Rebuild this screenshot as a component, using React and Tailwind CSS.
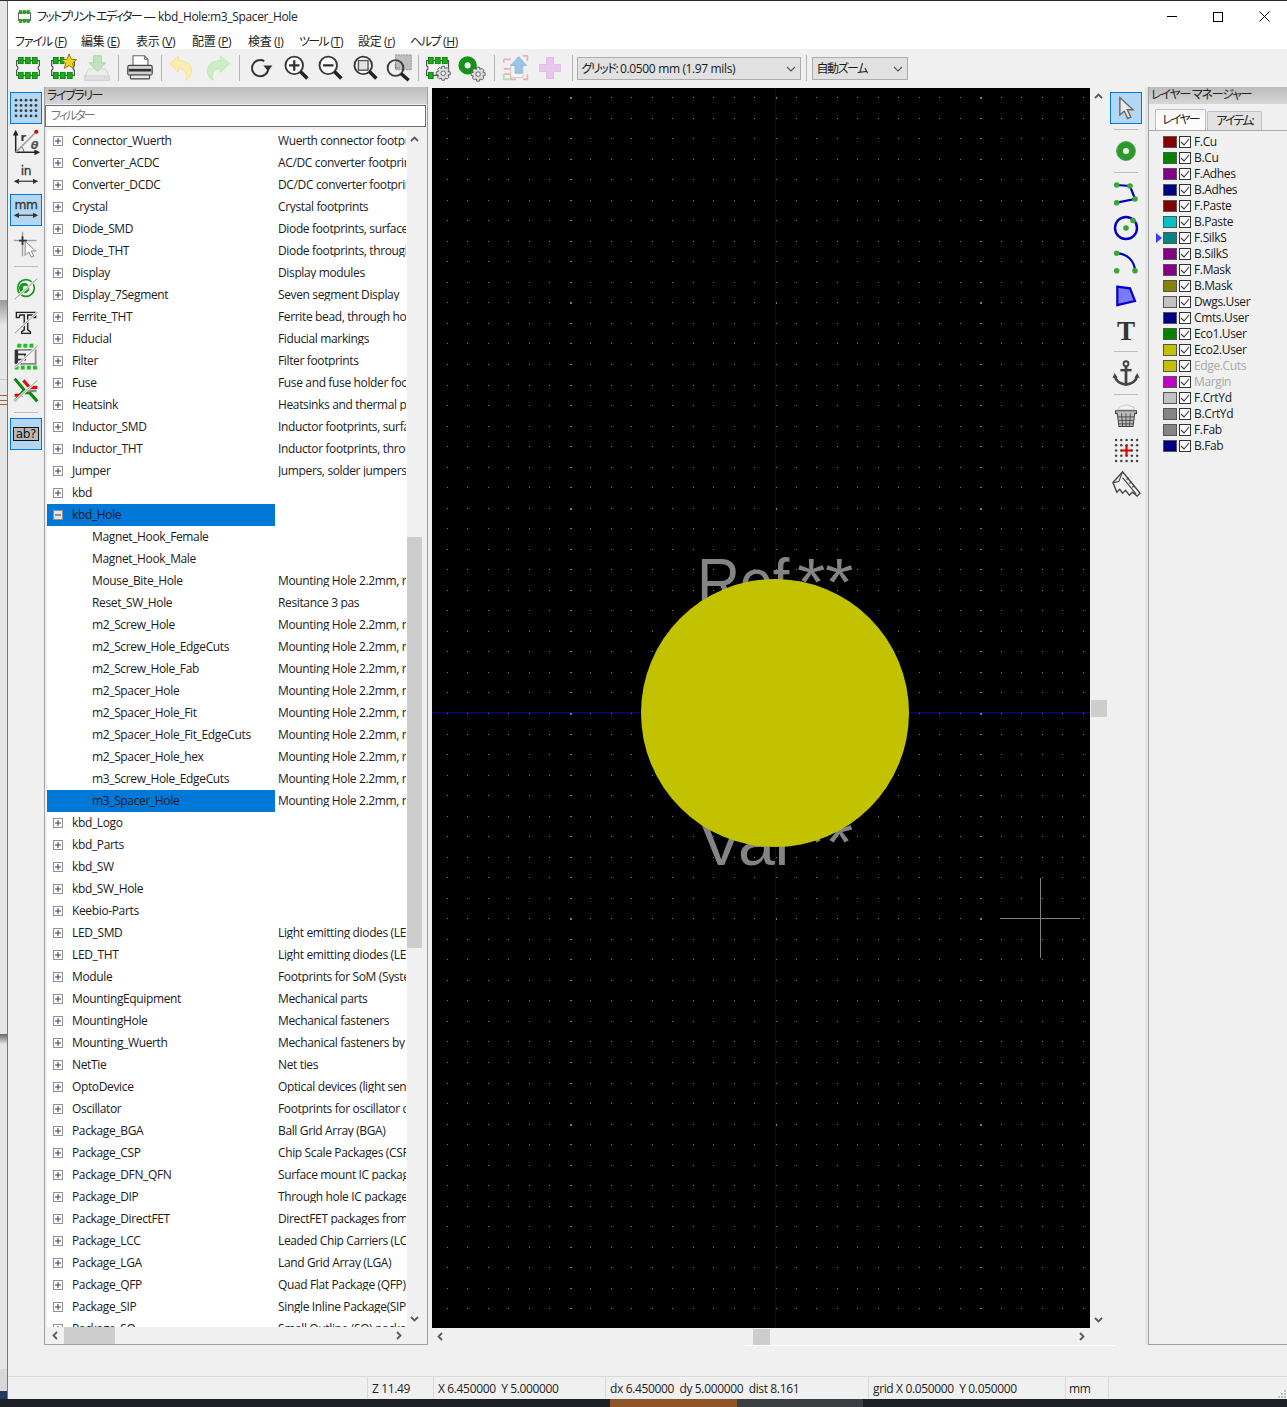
import React from "react";

const FONT = "font-['Open_Sans','Noto_Sans_CJK_JP',sans-serif]";

const TREE = [
  ["Connector_Wuerth", "Wuerth connector footprints"],
  ["Converter_ACDC", "AC/DC converter footprints"],
  ["Converter_DCDC", "DC/DC converter footprints"],
  ["Crystal", "Crystal footprints"],
  ["Diode_SMD", "Diode footprints, surface mount"],
  ["Diode_THT", "Diode footprints, through hole"],
  ["Display", "Display modules"],
  ["Display_7Segment", "Seven segment Display"],
  ["Ferrite_THT", "Ferrite bead, through hole"],
  ["Fiducial", "Fiducial markings"],
  ["Filter", "Filter footprints"],
  ["Fuse", "Fuse and fuse holder footprints"],
  ["Heatsink", "Heatsinks and thermal pads"],
  ["Inductor_SMD", "Inductor footprints, surface mount"],
  ["Inductor_THT", "Inductor footprints, through hole"],
  ["Jumper", "Jumpers, solder jumpers, etc"],
  ["kbd", ""],
  ["kbd_Hole", "", "open"],
  ["Magnet_Hook_Female", "", "child"],
  ["Magnet_Hook_Male", "", "child"],
  ["Mouse_Bite_Hole", "Mounting Hole 2.2mm, no annular", "child"],
  ["Reset_SW_Hole", "Resitance 3 pas", "child"],
  ["m2_Screw_Hole", "Mounting Hole 2.2mm, no annular", "child"],
  ["m2_Screw_Hole_EdgeCuts", "Mounting Hole 2.2mm, no annular", "child"],
  ["m2_Screw_Hole_Fab", "Mounting Hole 2.2mm, no annular", "child"],
  ["m2_Spacer_Hole", "Mounting Hole 2.2mm, no annular", "child"],
  ["m2_Spacer_Hole_Fit", "Mounting Hole 2.2mm, no annular", "child"],
  ["m2_Spacer_Hole_Fit_EdgeCuts", "Mounting Hole 2.2mm, no annular", "child"],
  ["m2_Spacer_Hole_hex", "Mounting Hole 2.2mm, no annular", "child"],
  ["m3_Screw_Hole_EdgeCuts", "Mounting Hole 2.2mm, no annular", "child"],
  ["m3_Spacer_Hole", "Mounting Hole 2.2mm, no annular", "sel"],
  ["kbd_Logo", ""],
  ["kbd_Parts", ""],
  ["kbd_SW", ""],
  ["kbd_SW_Hole", ""],
  ["Keebio-Parts", ""],
  ["LED_SMD", "Light emitting diodes (LED)"],
  ["LED_THT", "Light emitting diodes (LED)"],
  ["Module", "Footprints for SoM (System on Module)"],
  ["MountingEquipment", "Mechanical parts"],
  ["MountingHole", "Mechanical fasteners"],
  ["Mounting_Wuerth", "Mechanical fasteners by Wuerth"],
  ["NetTie", "Net ties"],
  ["OptoDevice", "Optical devices (light sensors)"],
  ["Oscillator", "Footprints for oscillator devices"],
  ["Package_BGA", "Ball Grid Array (BGA)"],
  ["Package_CSP", "Chip Scale Packages (CSP)"],
  ["Package_DFN_QFN", "Surface mount IC packages"],
  ["Package_DIP", "Through hole IC packages"],
  ["Package_DirectFET", "DirectFET packages from Infineon"],
  ["Package_LCC", "Leaded Chip Carriers (LCC)"],
  ["Package_LGA", "Land Grid Array (LGA)"],
  ["Package_QFP", "Quad Flat Package (QFP)"],
  ["Package_SIP", "Single Inline Package(SIP)"],
  ["Package_SO", "Small Outline (SO) packages"],
];

const LAYERS = [
  ["F.Cu", "bg-[#840000]"],
  ["B.Cu", "bg-[#008400]"],
  ["F.Adhes", "bg-[#840084]"],
  ["B.Adhes", "bg-[#000084]"],
  ["F.Paste", "bg-[#840000]"],
  ["B.Paste", "bg-[#00c2c2]"],
  ["F.SilkS", "bg-[#008484]", "active"],
  ["B.SilkS", "bg-[#840084]"],
  ["F.Mask", "bg-[#840084]"],
  ["B.Mask", "bg-[#848400]"],
  ["Dwgs.User", "bg-[#c2c2c2]"],
  ["Cmts.User", "bg-[#000084]"],
  ["Eco1.User", "bg-[#008400]"],
  ["Eco2.User", "bg-[#c2c200]"],
  ["Edge.Cuts", "bg-[#c2c200]", "dim"],
  ["Margin", "bg-[#c200c2]", "dim"],
  ["F.CrtYd", "bg-[#c2c2c2]"],
  ["B.CrtYd", "bg-[#848484]"],
  ["F.Fab", "bg-[#848484]"],
  ["B.Fab", "bg-[#000084]"],
];

const MENUS = [
  ["ファイル", "F", "w-[66px]", "tracking-[-1.2px]"],
  ["編集", "E", "w-[55px]", ""],
  ["表示", "V", "w-[56px]", ""],
  ["配置", "P", "w-[56px]", ""],
  ["検査", "I", "w-[51px]", ""],
  ["ツール", "T", "w-[59px]", "tracking-[-1.8px]"],
  ["設定", "r", "w-[52px]", ""],
  ["ヘルプ", "H", "w-[60px]", "tracking-[-1.4px]"],
];

function buildDots() {
  const small = [];
  for (let i = -16; i <= 15; i++) {
    for (let j = -30; j <= 30; j++) {
      const x = Math.round(775 + i * 20.53) - 432;
      const y = Math.round(713 + j * 20.53) - 88;
      const w = i % 10 === 0 ? 2 : 1;
      const h = j % 10 === 0 && i % 10 === 0 ? 2 : 1;
      small.push(`M${x} ${y}h${w}v${h}h${-w}z`);
    }
  }
  return small.join("");
}
const DOTS = buildDots();

function Ic({ size = 28, children, className = "" }) {
  return (
    <svg width={size} height={size} viewBox="0 0 32 32" fill="none" className={className}>
      {children}
    </svg>
  );
}

function Pads({ y }) {
  return (
    <>
      {[5, 13, 21].map((x) => (
        <rect key={x} x={x} y={y} width="5.5" height="7" fill="#12b312" stroke="#0a7a0a" strokeWidth="1" />
      ))}
    </>
  );
}

function FpBody() {
  return (
    <path
      d="M3 7.5H29V13.5C27 14.5 27 17.5 29 18.5V24.5H3V18.5C5 17.5 5 14.5 3 13.5Z"
      fill="#f4f4f4"
      stroke="#555"
      strokeWidth="1.4"
    />
  );
}

function FpIcon() {
  return (
    <Ic>
      <FpBody />
      <Pads y={4} />
      <Pads y={21} />
    </Ic>
  );
}

function FpStar() {
  return (
    <Ic>
      <FpBody />
      <Pads y={21} />
      <rect x="5" y="4" width="5.5" height="7" fill="#12b312" stroke="#0a7a0a" />
      <rect x="13" y="4" width="4" height="7" fill="#12b312" stroke="#0a7a0a" />
      <path
        d="M23 0L25.5 6L31.5 6.5L27 10.5L28.5 16.5L23 13.2L17.5 16.5L19 10.5L14.5 6.5L20.5 6Z"
        fill="#f3d21a"
        stroke="#7d6a00"
        strokeWidth="1"
      />
    </Ic>
  );
}

function DriveDown() {
  return (
    <Ic>
      <path d="M6 17L2 26V30H30V26L26 17Z" fill="#ececec" stroke="#d0d0d0" />
      <rect x="2" y="25" width="28" height="5" fill="#e0e0e0" stroke="#cfcfcf" />
      <circle cx="25" cy="27.5" r="1" fill="#b5dfb5" />
      <path d="M12 2H21V10H26L16.5 20L7 10H12Z" fill="#bfe3bb" stroke="#a9d2a5" />
    </Ic>
  );
}

function Printer() {
  return (
    <Ic>
      <path d="M8 2H21L25 6V14H8Z" fill="#fff" stroke="#666" strokeWidth="1.3" />
      <path d="M21 2V6H25" stroke="#666" strokeWidth="1" />
      <rect x="2" y="13" width="28" height="11" rx="2" fill="#d0d0d0" stroke="#444" strokeWidth="1.3" />
      <rect x="3" y="17" width="26" height="3" fill="#2f2f2f" />
      <rect x="5" y="24" width="22" height="4.5" rx="1.5" fill="#e8e8e8" stroke="#444" strokeWidth="1.3" />
    </Ic>
  );
}

function Undo() {
  return (
    <Ic>
      <path
        d="M2 11L12 2V7.5C22 7.5 28 13 27 21C26.5 25.5 23.5 29 20 30C22.5 26 22 17 12 16.5V21Z"
        fill="#f9eeb0"
        stroke="#efe19a"
        strokeWidth="1"
      />
    </Ic>
  );
}

function Redo() {
  return (
    <Ic>
      <path
        d="M30 11L20 2V7.5C10 7.5 4 13 5 21C5.5 25.5 8.5 29 12 30C9.5 26 10 17 20 16.5V21Z"
        fill="#cdeec5"
        stroke="#bfe4b7"
        strokeWidth="1"
      />
    </Ic>
  );
}

function Refresh() {
  return (
    <Ic size={26}>
      <path d="M20 7.5A10 10 0 1 0 25 16" stroke="#333" strokeWidth="2.4" />
      <path d="M19 13H30L24.5 20Z" fill="#333" />
    </Ic>
  );
}

function ZoomPlus() {
  return (
    <Ic>
      <circle cx="14" cy="13" r="10" fill="#fff" stroke="#3a3a3a" strokeWidth="2.2" />
      <path d="M21 20L29 28" stroke="#222" strokeWidth="4" />
      <path d="M14 7V19M8 13H20" stroke="#333" strokeWidth="2.6" />
    </Ic>
  );
}

function ZoomMinus() {
  return (
    <Ic>
      <circle cx="14" cy="13" r="10" fill="#fff" stroke="#3a3a3a" strokeWidth="2.2" />
      <path d="M21 20L29 28" stroke="#222" strokeWidth="4" />
      <path d="M8 13H20" stroke="#333" strokeWidth="2.6" />
    </Ic>
  );
}

function ZoomFit() {
  return (
    <Ic>
      <circle cx="14" cy="13" r="10" fill="#fff" stroke="#3a3a3a" strokeWidth="2.2" />
      <path d="M21 20L29 28" stroke="#222" strokeWidth="4" />
      <rect x="8.5" y="7.5" width="11" height="11" fill="#e4e4e4" stroke="#555" strokeWidth="1.6" />
    </Ic>
  );
}

function ZoomArea() {
  return (
    <Ic>
      <rect x="12" y="1" width="18" height="17" fill="#bdbdbd" stroke="#888" strokeWidth="1" strokeDasharray="2 1" />
      <circle cx="12" cy="16" r="9" stroke="#3a3a3a" strokeWidth="2.2" />
      <path d="M18.5 22.5L27 30" stroke="#222" strokeWidth="4" />
      <path d="M12 11V16H17" stroke="#777" strokeWidth="1.4" strokeDasharray="2 1" />
    </Ic>
  );
}

function Gear({ x, y }) {
  return (
    <g transform={`translate(${x} ${y})`}>
      <path
        d="M-1.5 -8H1.5L2 -5.5L4.5 -6.5L6.5 -4.5L5.5 -2L8 -1.5V1.5L5.5 2L6.5 4.5L4.5 6.5L2 5.5L1.5 8H-1.5L-2 5.5L-4.5 6.5L-6.5 4.5L-5.5 2L-8 1.5V-1.5L-5.5 -2L-6.5 -4.5L-4.5 -6.5L-2 -5.5Z"
        fill="#dcdcdc"
        stroke="#555"
        strokeWidth="1"
      />
      <circle r="2.6" fill="#f3f3f3" stroke="#555" strokeWidth="1" />
    </g>
  );
}

function FpGear() {
  return (
    <Ic>
      <path d="M3 7.5H28V24.5H3V18.5C5 17.5 5 14.5 3 13.5Z" fill="#f4f4f4" stroke="#555" strokeWidth="1.4" />
      <Pads y={4} />
      <rect x="5" y="21" width="5.5" height="7" fill="#12b312" stroke="#0a7a0a" />
      <Gear x={22} y={22} />
    </Ic>
  );
}

function PadGear() {
  return (
    <Ic>
      <circle cx="11" cy="13" r="7" stroke="#15921a" strokeWidth="7" />
      <Gear x={23} y={23} />
    </Ic>
  );
}

function ImportIcon() {
  return (
    <Ic>
      <path d="M2 6H10M2 6V10M2 17H12M2 23H10V29H16M24 29H29V23M24 2H29V8" stroke="#eeb0a8" strokeWidth="2" />
      <path d="M2 23V29H10" stroke="#b3dcb0" strokeWidth="2" />
      <path d="M10 12H24V27H10Z" fill="#f3f3f3" stroke="#c8c8c8" />
      <path d="M19 3L28 13H23V22H15V13H10Z" fill="#9cc4e8" stroke="#8ab3d8" />
    </Ic>
  );
}

function PlusPink() {
  return (
    <Ic>
      <path d="M12 4H20V12H28V20H20V28H12V20H4V12H12Z" fill="#e8c6ee" stroke="#e0bae6" />
    </Ic>
  );
}

function Slash() {
  return (
    <>
      <path d="M3 29L29 5" stroke="#fff" strokeWidth="3" />
      <path d="M3 29L29 5" stroke="#a8a8a8" strokeWidth="1.5" />
    </>
  );
}

function GridIcon() {
  const pts = [];
  for (let r = 0; r < 4; r++) for (let c = 0; c < 5; c++) pts.push([4.6 + c * 5.7, 7 + r * 6]);
  return (
    <Ic>
      {pts.map(([x, y]) => (
        <circle key={`${x}-${y}`} cx={x} cy={y} r="1.6" fill="#3c3c3c" />
      ))}
    </Ic>
  );
}

function PolarIcon() {
  return (
    <Ic size={30}>
      <path d="M5 27V6M5 27H29" stroke="#222" strokeWidth="1.6" />
      <path d="M5 3L2 9H8ZM31 27L25 24V30Z" fill="#222" />
      <path d="M5 27L27 5" stroke="#9a9a9a" strokeWidth="1.6" />
      <path d="M14 27A9 9 0 0 0 11 21" stroke="#555" strokeWidth="1" />
      <circle cx="27" cy="5" r="2.2" fill="#e00000" />
      <text x="10" y="15" fontSize="12" fontWeight="700" fontFamily="DejaVu Sans" fill="#333">r</text>
      <text x="21" y="23" fontSize="12" fontWeight="700" fontStyle="italic" fontFamily="DejaVu Sans" fill="#555">θ</text>
    </Ic>
  );
}

function UnitIcon({ t, fs = 14 }) {
  return (
    <Ic>
      <text x="16" y="15" textAnchor="middle" fontSize={fs} fontFamily="DejaVu Sans" fill="#333" stroke="#333" strokeWidth="0.35">{t}</text>
      <path d="M4 22H28" stroke="#333" strokeWidth="1.4" />
      <path d="M2 22L8 19V25ZM30 22L24 19V25Z" fill="#333" />
    </Ic>
  );
}

function CrossCursor() {
  return (
    <Ic>
      <path d="M2 12H28" stroke="#a0a0a0" strokeWidth="1.6" />
      <path d="M12 2V30" stroke="#a0a0a0" strokeWidth="1.6" />
      <path d="M8 12H17M12 7V17" stroke="#333" strokeWidth="2" />
      <path d="M15 13V29L19 25L22 31L25 30L22 24H27Z" fill="#fff" stroke="#777" strokeWidth="1" />
    </Ic>
  );
}

function PadSlash() {
  return (
    <Ic>
      <circle cx="16" cy="16" r="9.5" fill="#fff" stroke="#159a1a" strokeWidth="2" />
      <circle cx="14" cy="16" r="6" fill="#159a1a" />
      <circle cx="15" cy="16" r="2.5" fill="#fff" />
      <Slash />
    </Ic>
  );
}

function TSlash() {
  return (
    <Ic>
      <path d="M5 5H27V11H24L23 8H18V25L21 27V29H11V27L14 25V8H9L8 11H5Z" fill="#e8e8e8" stroke="#222" strokeWidth="1.6" />
      <Slash />
    </Ic>
  );
}

function FpSlash() {
  return (
    <Ic>
      <path d="M5 9H27V25H5Z" fill="#f0f0f0" stroke="#888" strokeWidth="2" />
      <path d="M5 9V25" stroke="#333" strokeWidth="4" />
      <path d="M5 14H15V20H5" stroke="#333" strokeWidth="2" />
      {[6, 13, 20].map((x) => (
        <rect key={x} x={x} y="2" width="4.5" height="4.5" fill="#19c419" />
      ))}
      {[3, 10, 17, 24].map((x) => (
        <rect key={x} x={x} y="27" width="4.5" height="4.5" fill="#19c419" />
      ))}
      <Slash />
    </Ic>
  );
}

function TracksSlash() {
  return (
    <Ic>
      <path d="M3 3L14 16L3 29" stroke="#0a8a0a" strokeWidth="3.5" />
      <path d="M29 29L20 19H11" stroke="#0a8a0a" strokeWidth="3.5" />
      <path d="M13 5L20 13H29" stroke="#e01010" strokeWidth="3.5" />
      <path d="M3 22H12" stroke="#e01010" strokeWidth="3.5" />
      <path d="M15 17H28" stroke="#888" strokeWidth="3" />
      <Slash />
    </Ic>
  );
}

function AbIcon() {
  return (
    <svg width="26" height="14" viewBox="0 0 26 14">
      <rect x="0.5" y="0.5" width="25" height="13" fill="#b8b8b8" stroke="#111" />
      <text x="13" y="11" textAnchor="middle" fontSize="12" fontFamily="DejaVu Sans" fill="#111">ab?</text>
    </svg>
  );
}

function ArrowTool() {
  return (
    <Ic>
      <path d="M9 4V24L14 19.5L18 28L21.5 26.5L17.5 18H24Z" fill="#eaeaea" stroke="#666" strokeWidth="1.6" />
    </Ic>
  );
}

function PadTool() {
  return (
    <Ic>
      <circle cx="16" cy="16" r="7" stroke="#2b9a2b" strokeWidth="7" />
      <circle cx="16" cy="16" r="10.8" stroke="#1d7a1d" strokeWidth="0.8" />
    </Ic>
  );
}

const G = "#3aa63a";

function PolyTool() {
  return (
    <Ic size={32}>
      <path d="M6.7 7L20 8L25 21L6.7 24.7" stroke="#0000c0" strokeWidth="2.2" />
      {[[6.7, 7], [20, 8], [25, 21], [6.7, 24.7]].map(([x, y]) => (
        <circle key={x + y} cx={x} cy={y} r="2.8" fill={G} />
      ))}
    </Ic>
  );
}

function CircleTool() {
  return (
    <Ic size={32}>
      <circle cx="16" cy="16" r="11" stroke="#0000c0" strokeWidth="2.4" />
      <circle cx="16" cy="16" r="2.8" fill={G} />
      <circle cx="23" cy="8.5" r="2.8" fill={G} />
    </Ic>
  );
}

function ArcTool() {
  return (
    <Ic size={32}>
      <path d="M6.7 7.3A18 18 0 0 1 25 24.7" stroke="#0000c0" strokeWidth="2.2" />
      <circle cx="6.7" cy="7.3" r="2.8" fill={G} />
      <circle cx="6.7" cy="24.7" r="2.8" fill={G} />
      <circle cx="25" cy="24.7" r="2.8" fill={G} />
    </Ic>
  );
}

function PolygonTool() {
  return (
    <Ic size={32}>
      <path d="M7.3 6.7L20 8.3L25 21L7.3 25Z" fill="#7b7bf5" stroke="#0000d0" strokeWidth="2.2" />
    </Ic>
  );
}

function TextTool() {
  return (
    <Ic>
      <text x="16" y="27" textAnchor="middle" fontSize="31" fontWeight="700" fontFamily="Liberation Serif" fill="#333">T</text>
    </Ic>
  );
}

function AnchorTool() {
  return (
    <Ic size={30}>
      <circle cx="16" cy="6" r="2.6" stroke="#444" strokeWidth="2" />
      <path d="M16 9V28" stroke="#444" strokeWidth="3" />
      <path d="M10 13H22" stroke="#444" strokeWidth="2.5" />
      <path d="M4 19C5 25 10 27.5 16 28.5C22 27.5 27 25 28 19" stroke="#444" strokeWidth="2.6" />
      <path d="M1.5 21L4 16L7 21ZM25 21L28 16L30.5 21Z" fill="#444" />
    </Ic>
  );
}

function TrashTool() {
  return (
    <Ic>
      <path d="M7 8C8 4 12 5 14 4C17 2 21 5 25 6V9H7Z" fill="#f4f4f4" stroke="#bbb" />
      <path d="M4 10H28V13H26L24 28H8L6 13H4Z" fill="#bbb" stroke="#444" strokeWidth="1.2" />
      <path d="M11 13L12 28M16 13V28M21 13L20 28M7 17H25M7.5 21H24.5M8 25H24" stroke="#444" strokeWidth="1" />
    </Ic>
  );
}

function GridCross() {
  const pts = [];
  for (let r = 0; r < 5; r++) for (let c = 0; c < 5; c++) pts.push([4.5 + c * 5.8, 4.5 + r * 5.8]);
  return (
    <Ic size={29}>
      {pts.map(([x, y]) => (
        <circle key={`${x}-${y}`} cx={x} cy={y} r="1.4" fill="#444" />
      ))}
      <path d="M16 10V22M10 16H22" stroke="#e00000" strokeWidth="2.4" />
    </Ic>
  );
}

function Calipers() {
  return (
    <Ic size={31}>
      <path d="M2 14L12 3L30 25L27 28L22 24L19 27L15 22L12 25L9 21L6 24Z" fill="#f2f2f2" stroke="#444" strokeWidth="1.4" />
      <path d="M2 14L8 13L12 3M12 9L26 26M16 11L18 9M19 15L21 13M22 19L24 17" stroke="#444" strokeWidth="1.2" />
    </Ic>
  );
}

function Cell({ selected, h = "h-[34px]", children }) {
  return (
    <div className={`${h} w-full flex items-center justify-center`}>
      {selected ? (
        <div className="w-[32px] h-[32px] bg-[#b3d7f3] border border-[#0078d7] flex items-center justify-center">
          {children}
        </div>
      ) : (
        children
      )}
    </div>
  );
}

function VSep({ h }) {
  return (
    <div className={`${h} w-full flex items-center justify-center`}>
      <div className="w-[24px] h-px bg-[#bdbdbd]" />
    </div>
  );
}

function TCell({ children }) {
  return <div className="w-[34.5px] flex-none flex items-center justify-center">{children}</div>;
}

function TSep({ w }) {
  return (
    <div className={`${w} flex-none flex items-center justify-center`}>
      <div className="w-px h-[26px] bg-[#b4b4b4]" />
    </div>
  );
}

function Chevron({ d, color = "#5a5a5a" }) {
  const paths = {
    up: "M1 6L4.5 2.5L8 6",
    down: "M1 3L4.5 6.5L8 3",
    left: "M6 1L2.5 4.5L6 8",
    right: "M3 1L6.5 4.5L3 8",
  };
  return (
    <svg width="9" height="9" viewBox="0 0 9 9" fill="none">
      <path d={paths[d]} stroke={color} strokeWidth="1.8" />
    </svg>
  );
}

function Expander({ open, light }) {
  return (
    <svg width="10" height="10" viewBox="0 0 10 10" className="flex-none">
      <rect x="0.5" y="0.5" width="9" height="9" fill={light ? "#e6e6e6" : "#fff"} stroke="#919191" />
      <path d={open ? "M2 5H8" : "M2 5H8M5 2V8"} stroke="#2d3a66" strokeWidth="1" />
    </svg>
  );
}

function TreeRow({ name, desc, kind }) {
  const isChild = kind === "child" || kind === "sel";
  const hl = kind === "open" || kind === "sel";
  return (
    <div className="h-[22px] flex items-center flex-none text-[#1a1a1a]">
      <div className={`w-[228px] h-full flex items-center flex-none ${hl ? "bg-[#0078d7]" : ""} ${isChild ? "pl-[45px]" : "pl-[6px]"}`}>
        {!isChild && <Expander open={kind === "open"} light={kind === "open"} />}
        <span className={`whitespace-nowrap ${isChild ? "" : "ml-[9px]"}`}>{name}</span>
      </div>
      <div className="w-[131px] pl-[3px] whitespace-nowrap overflow-hidden flex-none">{desc}</div>
    </div>
  );
}

function LayerRow({ name, color, kind }) {
  return (
    <div className="relative h-[16px] flex items-center pl-[14px]">
      {kind === "active" && (
        <svg width="6" height="10" viewBox="0 0 6 10" className="absolute left-[7px] top-[3px]">
          <path d="M0 0L6 5L0 10Z" fill="#3b3bff" />
        </svg>
      )}
      <div className={`w-[14px] h-[12px] border border-[#555] ${color}`} />
      <div className="ml-[2px] w-[12px] h-[12px] border border-[#333] bg-white flex items-center justify-center">
        <svg width="10" height="10" viewBox="0 0 10 10" fill="none">
          <path d="M1 5L4 8L9 2" stroke="#333" strokeWidth="1.1" />
        </svg>
      </div>
      <span className={`ml-[3px] ${kind === "dim" ? "text-[#a8a8a8]" : "text-[#1a1a1a]"}`}>{name}</span>
    </div>
  );
}

function Combo({ w, children }) {
  return (
    <div className={`${w} h-[23px] mt-px flex-none flex items-center justify-between bg-[#e1e1e1] border border-[#adadad] pl-[4px] pr-[4px] text-[#1a1a1a]`}>
      <span className="whitespace-nowrap">{children}</span>
      <svg width="10" height="6" viewBox="0 0 10 6" fill="none">
        <path d="M1 1L5 5L9 1" stroke="#555" strokeWidth="1.1" />
      </svg>
    </div>
  );
}

function Canvas() {
  return (
    <svg width="658" height="1240" viewBox="0 0 658 1240" className="block">
      <rect width="658" height="1240" fill="#000" />
      <path d={DOTS} fill="#7c7c7c" />
      <path d="M343.5 0V1240" stroke="#000088" strokeWidth="1" />
      <path d="M0 624.5H658" stroke="#0000a0" strokeWidth="1" />
      <text x="265" y="517" fontSize="67" fontFamily="Liberation Sans" fill="#848484" textLength="92" lengthAdjust="spacingAndGlyphs">Ref</text>
      <text x="365" y="517" fontSize="67" fontFamily="Liberation Sans" fill="#848484" textLength="56" lengthAdjust="spacingAndGlyphs">**</text>
      <text x="267" y="777" fontSize="67" fontFamily="Liberation Sans" fill="#848484" textLength="90" lengthAdjust="spacingAndGlyphs">Val</text>
      <text x="365" y="777" fontSize="67" fontFamily="Liberation Sans" fill="#848484" textLength="56" lengthAdjust="spacingAndGlyphs">**</text>
      <circle cx="343" cy="625" r="134" fill="#c2c200" />
      <path d="M608.5 790V870M568 830.5H648" stroke="#808080" strokeWidth="1" />
    </svg>
  );
}

export default function App() {
  return (
    <div className={`${FONT} w-[1287px] h-[1407px] overflow-hidden flex flex-col text-[12px] leading-none tracking-[-0.36px] [font-feature-settings:'palt'] bg-[#1d2026]`}>
      <div className="h-px flex-none bg-[#2b2b2b]" />
      <div className="flex-1 flex min-h-0">
        {/* desktop behind the window */}
        <div className="w-[8px] flex-none flex flex-col border-r border-[#777] bg-[#e6e6e6]">
          <div className="h-[299px] flex-none" />
          <div className="h-[24px] flex-none bg-gradient-to-b from-[#9a9a9a] to-[#e2e2e2]" />
          <div className="h-[55px] flex-none" />
          <div className="h-px flex-none bg-[#c8c8c8]" />
          <div className="h-[15px] flex-none" />
          <div className="h-[10px] flex-none flex flex-col justify-between">
            <div className="h-px bg-[#8a6a4a]" />
            <div className="h-px bg-[#8a6a4a]" />
            <div className="h-px bg-[#8a6a4a]" />
          </div>
          <div className="h-[629px] flex-none" />
          <div className="h-[10px] flex-none bg-gradient-to-b from-[#666] to-[#e6e6e6]" />
          <div className="flex-1" />
          <div className="h-[22px] flex-none bg-[#d8d8d8]" />
          <div className="h-[8px] flex-none bg-[#233a63]" />
        </div>

        {/* window */}
        <div className="flex-1 flex flex-col min-w-0 bg-[#f0f0f0]">
          <div className="h-[30px] flex-none flex items-center bg-white pl-[9px] pt-[1px] text-[#222]">
            <svg width="15" height="15" viewBox="0 0 32 32" className="flex-none">
              <rect x="3" y="8" width="26" height="16" fill="#f4f4f4" stroke="#555" strokeWidth="2" />
              <Pads y={3} />
              <Pads y={22} />
            </svg>
            <span className="ml-[5px] whitespace-nowrap">
              <span className="tracking-[-1.7px]">フットプリント エディター</span> — kbd_Hole:m3_Spacer_Hole
            </span>
            <div className="ml-auto flex items-center">
              <div className="w-[46px] flex justify-center">
                <div className="w-[10px] h-px bg-black" />
              </div>
              <div className="w-[46px] flex justify-center">
                <div className="w-[10px] h-[10px] border border-black" />
              </div>
              <div className="w-[46px] flex justify-center">
                <svg width="11" height="11" viewBox="0 0 11 11">
                  <path d="M0.5 0.5L10.5 10.5M10.5 0.5L0.5 10.5" stroke="#000" strokeWidth="1" />
                </svg>
              </div>
            </div>
          </div>

          <div className="h-[18px] flex-none flex items-center bg-white pl-[7px] pt-[3px] text-[#222]">
            {MENUS.map(([a, u, w, t]) => (
              <div key={u} className={`${w} flex-none whitespace-nowrap`}>
                <span className={t}>{a}</span>
                {" ("}
                <span className="underline">{u}</span>
                {")"}
              </div>
            ))}
          </div>

          <div className="h-[38px] flex-none flex items-center pl-[3px] bg-[#f0f0f0]">
            <TCell><FpIcon /></TCell>
            <TCell><FpStar /></TCell>
            <TCell><DriveDown /></TCell>
            <TSep w="w-[8px]" />
            <TCell><Printer /></TCell>
            <TSep w="w-[8px]" />
            <TCell><Undo /></TCell>
            <TCell><Redo /></TCell>
            <TSep w="w-[10px]" />
            <TCell><Refresh /></TCell>
            <TCell><ZoomPlus /></TCell>
            <TCell><ZoomMinus /></TCell>
            <TCell><ZoomFit /></TCell>
            <TCell><ZoomArea /></TCell>
            <TSep w="w-[4px]" />
            <TCell><FpGear /></TCell>
            <TCell><PadGear /></TCell>
            <TSep w="w-[9px]" />
            <TCell><ImportIcon /></TCell>
            <TCell><PlusPink /></TCell>
            <TSep w="w-[9px]" />
            <Combo w="w-[224px]">
              <span className="tracking-[-1.4px]">グリッド:</span> 0.0500 mm (1.97 mils)
            </Combo>
            <TSep w="w-[11px]" />
            <Combo w="w-[96px]">
              <span className="tracking-[-1.5px]">自動ズーム</span>
            </Combo>
          </div>

          <div className="h-[1258px] flex-none flex">
            {/* left toolbar */}
            <div className="w-[36px] flex-none flex flex-col items-center pt-[4px]">
              <Cell selected><GridIcon /></Cell>
              <Cell><PolarIcon /></Cell>
              <Cell><UnitIcon t="in" /></Cell>
              <Cell selected><UnitIcon t="mm" /></Cell>
              <Cell><CrossCursor /></Cell>
              <VSep h="h-[10px]" />
              <Cell><PadSlash /></Cell>
              <Cell><TSlash /></Cell>
              <Cell><FpSlash /></Cell>
              <Cell><TracksSlash /></Cell>
              <VSep h="h-[10px]" />
              <Cell selected><AbIcon /></Cell>
            </div>

            {/* library panel */}
            <div className="w-[384px] flex-none flex flex-col border-l border-r border-b border-[#a0a0a0]">
              <div className="h-[17px] flex-none flex items-center pl-[2px] bg-gradient-to-b from-[#bcbcbc] to-[#d6d6d6] text-[#222]">
                <span className="tracking-[-1.4px]">ライブラリー</span>
              </div>
              <div className="h-[22px] mt-[1px] mr-[1px] flex-none flex items-center pl-[5px] bg-white border border-[#6e6e6e] text-[#777]">
                <span className="tracking-[-2px]">フィルター</span>
              </div>
              <div className="mt-[3px] ml-[2px] mr-[4px] flex-1 min-h-0 flex flex-col">
                <div className="flex-1 min-h-0 flex">
                  <div className="w-[360px] flex-none bg-white overflow-hidden flex flex-col">
                    {TREE.map(([n, d, k]) => (
                      <TreeRow key={n} name={n} desc={d} kind={k} />
                    ))}
                  </div>
                  <div className="w-[15px] flex-none flex flex-col items-center bg-[#f0f0f0]">
                    <div className="h-[18px] flex-none flex items-center justify-center"><Chevron d="up" /></div>
                    <div className="h-[389px] flex-none" />
                    <div className="h-[411px] w-full flex-none bg-[#cdcdcd]" />
                    <div className="flex-1" />
                    <div className="h-[18px] flex-none flex items-center justify-center"><Chevron d="down" /></div>
                  </div>
                </div>
                <div className="h-[17px] flex-none flex items-center bg-[#f0f0f0]">
                  <div className="w-[17px] flex-none flex justify-center"><Chevron d="left" /></div>
                  <div className="w-[51px] h-full flex-none bg-[#cdcdcd]" />
                  <div className="w-[275px] flex-none" />
                  <div className="w-[17px] flex-none flex justify-center"><Chevron d="right" /></div>
                </div>
              </div>
            </div>

            <div className="w-[4px] flex-none" />

            {/* canvas */}
            <div className="w-[658px] flex-none flex flex-col pt-[1px]">
              <Canvas />
              <div className="h-[17px] flex-none flex items-center justify-between px-[4px]">
                <Chevron d="left" />
                <div className="w-[17px] h-[16px] bg-[#cdcdcd]" />
                <Chevron d="right" />
              </div>
            </div>
            <div className="w-[17px] h-[1241px] flex-none flex flex-col items-center justify-between pt-[5px] pb-[4px]">
              <Chevron d="up" />
              <div className="w-[16px] h-[17px] bg-[#cdcdcd]" />
              <Chevron d="down" />
            </div>

            {/* right toolbar */}
            <div className="w-[38px] flex-none flex flex-col items-center pt-[4px]">
              <Cell selected><ArrowTool /></Cell>
              <VSep h="h-[9px]" />
              <Cell><PadTool /></Cell>
              <VSep h="h-[9px]" />
              <Cell><PolyTool /></Cell>
              <Cell><CircleTool /></Cell>
              <Cell><ArcTool /></Cell>
              <Cell><PolygonTool /></Cell>
              <Cell><TextTool /></Cell>
              <VSep h="h-[9px]" />
              <Cell><AnchorTool /></Cell>
              <VSep h="h-[9px]" />
              <Cell><TrashTool /></Cell>
              <Cell><GridCross /></Cell>
              <Cell><Calipers /></Cell>
            </div>

            <div className="w-[3px] flex-none bg-[#e4e4e4]" />

            {/* layer manager */}
            <div className="flex-1 min-w-0 flex flex-col border-l border-b border-[#a0a0a0]">
              <div className="h-[17px] flex-none flex items-center pl-[2px] pb-[1px] bg-gradient-to-b from-[#bcbcbc] to-[#d6d6d6] text-[#222] whitespace-nowrap">
                <span className="tracking-[-1.2px]">レイヤー マネージャー</span>
              </div>
              <div className="h-[27px] flex-none flex items-end pl-[6px] gap-[1px] border-b border-[#a8a8a8]">
                <div className="w-[51px] h-[21px] pb-[1px] flex items-center justify-center bg-gradient-to-b from-[#f8f8f8] to-white border border-b-0 border-[#c0c0c0] rounded-t-[2px] text-[#222]">
                  <span className="tracking-[-1.8px]">レイヤー</span>
                </div>
                <div className="w-[55px] h-[19px] pb-[1px] flex items-center justify-center bg-[#e2e2e2] border border-b-0 border-[#c0c0c0] rounded-t-[2px] text-[#222]">
                  <span className="tracking-[-1.8px]">アイテム:</span>
                </div>
              </div>
              <div className="pt-[3px] flex flex-col">
                {LAYERS.map(([n, c, k]) => (
                  <LayerRow key={n} name={n} color={c} kind={k} />
                ))}
              </div>
            </div>
          </div>

          <div className="h-[31px] flex-none bg-[#f0f0f0]">
            <div className="h-px ml-[737px] w-[370px] bg-white" />
          </div>

          <div className="h-[23px] flex-none flex items-center border-t border-[#d9d9d9] bg-[#f0f0f0] text-[#222] whitespace-pre">
            <div className="w-[359px] flex-none" />
            <div className="w-[66px] h-full flex-none flex items-center pl-[4px] pt-[1px] border-l border-[#d9d9d9]">Z 11.49</div>
            <div className="w-[172px] h-full flex-none flex items-center pl-[4px] pt-[1px] border-l border-[#d9d9d9]">X 6.450000  Y 5.000000</div>
            <div className="w-[263px] h-full flex-none flex items-center pl-[4px] pt-[1px] border-l border-[#d9d9d9]">dx 6.450000  dy 5.000000  dist 8.161</div>
            <div className="w-[197px] h-full flex-none flex items-center pl-[4px] pt-[1px] border-l border-[#d9d9d9]">grid X 0.050000  Y 0.050000</div>
            <div className="w-[43px] h-full flex-none flex items-center pl-[3px] pt-[1px] border-l border-[#d9d9d9]">mm</div>
            <div className="flex-1 h-full flex items-end justify-end border-l border-[#d9d9d9] pr-[1px] pb-[1px]">
              <svg width="8" height="8" viewBox="0 0 8 8">
                <path d="M6 0h2v2H6zM3 3h2v2H3zM6 3h2v2H6zM0 6h2v2H0zM3 6h2v2H3zM6 6h2v2H6z" fill="#c0c0c0" />
              </svg>
            </div>
          </div>
        </div>
      </div>

      {/* desktop task bar under the window */}
      <div className="h-[8px] flex-none flex bg-[#1d2026]">
        <div className="w-[610px] flex-none" />
        <div className="w-[127px] flex-none bg-[#8f5428]" />
        <div className="w-[126px] flex-none bg-[#3c3f41]" />
      </div>
    </div>
  );
}
